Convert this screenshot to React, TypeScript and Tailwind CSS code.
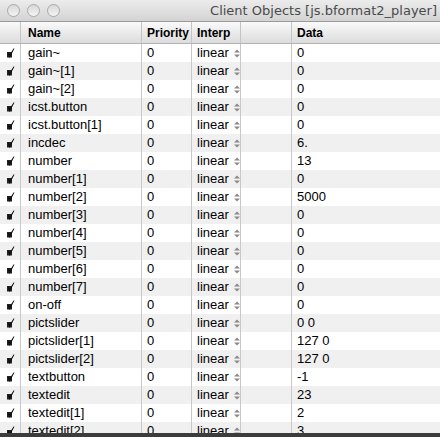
import React from 'react';

interface Row {
    name: string;
    data: string;
}

const rows: Row[] = [
    { name: 'gain~', data: '0' },
    { name: 'gain~[1]', data: '0' },
    { name: 'gain~[2]', data: '0' },
    { name: 'icst.button', data: '0' },
    { name: 'icst.button[1]', data: '0' },
    { name: 'incdec', data: '6.' },
    { name: 'number', data: '13' },
    { name: 'number[1]', data: '0' },
    { name: 'number[2]', data: '5000' },
    { name: 'number[3]', data: '0' },
    { name: 'number[4]', data: '0' },
    { name: 'number[5]', data: '0' },
    { name: 'number[6]', data: '0' },
    { name: 'number[7]', data: '0' },
    { name: 'on-off', data: '0' },
    { name: 'pictslider', data: '0 0' },
    { name: 'pictslider[1]', data: '127 0' },
    { name: 'pictslider[2]', data: '127 0' },
    { name: 'textbutton', data: '-1' },
    { name: 'textedit', data: '23' },
    { name: 'textedit[1]', data: '2' },
    { name: 'textedit[2]', data: '3' },
];

const Check = () => (
    <svg width="9" height="11" viewBox="0 0 9 11" className="shrink-0">
        <rect x="1" y="4" width="5" height="5.5" fill="#222" />
        <path d="M1.5 5 L3.5 10 L8.5 0.5 L7.5 0.5 L3.8 6.5 L2.5 4.5 Z" fill="#111" />
    </svg>
);

const Stepper = () => (
    <svg width="6" height="9" viewBox="0 0 6 9" className="ml-[5px] shrink-0">
        <path d="M3 0.5 L6 3.5 L0 3.5 Z" fill="#8a8a8a" />
        <path d="M0 5.5 L6 5.5 L3 8.5 Z" fill="#8a8a8a" />
    </svg>
);

const Light = () => (
    <div className="w-[13px] h-[13px] rounded-full border border-[#a9a9a9] bg-gradient-to-b from-[#d8d8d8] to-[#f4f4f4]" />
);

const App: React.FC = () => {
    return (
        <div
            className="w-[440px] h-[437px] overflow-hidden bg-white flex flex-col text-[13px] text-black"
            style={{ fontFamily: '"Liberation Sans", Arial, sans-serif' }}
        >
            {/* Title bar */}
            <div
                className="h-[22px] shrink-0 flex items-center bg-gradient-to-b from-[#ececec] to-[#d3d3d3] border-b border-[#9a9a9a]"
                style={{ fontFamily: '"DejaVu Sans", sans-serif' }}
            >
                <div className="flex gap-[7px] pl-[7px]">
                    <Light />
                    <Light />
                    <Light />
                </div>
                <div className="ml-auto pr-[3px] text-[13px] text-[#4a4a4a]">
                    Client Objects [js.bformat2_player]
                </div>
            </div>

            {/* Header */}
            <div className="h-[22px] shrink-0 flex bg-gradient-to-b from-[#fafafa] to-[#dcdcdc] border-b border-[#b3b3b3] font-bold text-[12px]">
                <div className="w-[21px] border-r border-[#c4c4c4]" />
                <div className="w-[121px] border-r border-[#c4c4c4] pl-[7px] flex items-center">Name</div>
                <div className="w-[50px] border-r border-[#c4c4c4] pl-[5px] flex items-center">Priority</div>
                <div className="w-[49px] border-r border-[#c4c4c4] pl-[5px] flex items-center">Interp</div>
                <div className="w-[51px] border-r border-[#c4c4c4]" />
                <div className="flex-1 pl-[5px] flex items-center">Data</div>
            </div>

            {/* Rows */}
            <div className="flex-1 overflow-hidden">
                {rows.map((row, i) => (
                    <div
                        key={row.name}
                        className={`h-[18px] flex ${i % 2 === 0 ? 'bg-white' : 'bg-[#f0f0f0]'}`}
                    >
                        <div className="w-[21px] border-r border-[#c8c8c8] flex items-center justify-center">
                            <Check />
                        </div>
                        <div className="w-[121px] border-r border-[#c8c8c8] pl-[7px] flex items-center">{row.name}</div>
                        <div className="w-[50px] border-r border-[#c8c8c8] pl-[5px] flex items-center">0</div>
                        <div className="w-[49px] border-r border-[#c8c8c8] pl-[5px] flex items-center overflow-hidden">
                            linear
                            <Stepper />
                        </div>
                        <div className="w-[51px] border-r border-[#c8c8c8]" />
                        <div className="flex-1 pl-[5px] flex items-center">{row.data}</div>
                    </div>
                ))}
            </div>

            {/* Bottom edge */}
            <div className="h-[4px] shrink-0 bg-[#3c3c3c]" />
        </div>
    );
};

export default App;
